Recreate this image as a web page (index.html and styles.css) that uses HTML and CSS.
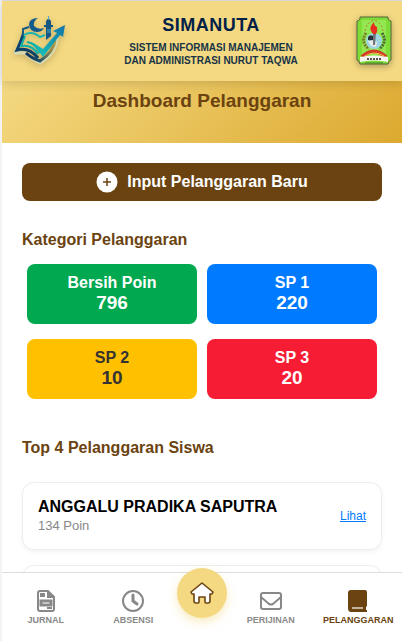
FILE: index.html
```html
<!DOCTYPE html>
<html lang="id">
<head>
  <meta charset="UTF-8">
  <meta name="viewport" content="width=device-width, initial-scale=1.0">
  <title>SIMANUTA - Dashboard Pelanggaran</title>
  <link rel="stylesheet" href="styles.css">
</head>
<body>
  <div class="app">
    <header class="header">
      <svg class="logo" viewBox="0 0 52 52" aria-hidden="true">
        <defs>
          <linearGradient id="blue" x1="0" y1="1" x2="1" y2="0">
            <stop offset="0" stop-color="#17cbbd"/>
            <stop offset="0.5" stop-color="#14a0b0"/>
            <stop offset="1" stop-color="#1670a8"/>
          </linearGradient>
          <linearGradient id="shield" x1="0" y1="0" x2="1" y2="0">
            <stop offset="0" stop-color="#0d3358"/>
            <stop offset="0.45" stop-color="#174d68"/>
            <stop offset="1" stop-color="#b39a45"/>
          </linearGradient>
        </defs>
        <!-- perisai -->
        <path d="M8 24 L1 38 L11 38 Q17 44 26 48 Q42 39 43 23" fill="none" stroke="#d6dbb4" stroke-width="3"/>
        <path d="M12 38 Q17 43 26 46 Q40 37 41 25" fill="none" stroke="url(#shield)" stroke-width="3"/>
        <path d="M15 12 L9 14 V22 M9 18 L6 28" fill="none" stroke="#165b86" stroke-width="2"/>
        <!-- bulan dan menara -->
        <path d="M24 3 Q15 3 15 10 Q16 17 23 17 Q28 17 30 13 Q24 15 20 11 Q19 6 24 3Z" fill="#155b8c"/>
        <path d="M32 25 V12 H30 V10 H32 V6 L34.500 3 L37 6 V10 H39 V12 H37 V21Z" fill="#155682"/>
        <path d="M34.500 1 V5 M34 14 V18 M36 14 V18" stroke="#50a8c5" stroke-width="1"/>
        <!-- buku -->
        <path d="M10 20 Q18 15 26 22 L31 20" fill="none" stroke="#1bb7b0" stroke-width="2"/>
        <path d="M9 21 L3 35 Q15 32 24 43" fill="none" stroke="#0d4169" stroke-width="3"/>
        <path d="M11 21 L7 31 Q18 29 24 39 M13 27 Q21 28 26 38" fill="none" stroke="#0aafa8" stroke-width="2"/>
        <!-- panah -->
        <path d="M18 27 L29 34 L43 18 L39 16 L51 10 L49 22 L46 20 L29 42Z" fill="url(#blue)"/>
      </svg>
      <div class="brand">
        <h1 class="brand-name">SIMANUTA</h1>
        <p class="brand-text">SISTEM INFORMASI MANAJEMEN<br>DAN ADMINISTRASI NURUT TAQWA</p>
      </div>
      <svg class="emblem" viewBox="0 0 36 50" aria-hidden="true">
        <path d="M4 1 H32 V3 Q33 5 35 5 V44 Q33 44 32 48 H4 Q3 44 1 44 V5 Q3 5 4 3Z" fill="#7ddd36" stroke="#57653b" stroke-width="1"/>
        <path d="M6 4 H30 V44 H6Z" fill="#93e852"/>
        <path d="M9 15 Q10 7 18 4 Q26 7 27 15" fill="none" stroke="#b07a35" stroke-width="1" stroke-dasharray="2 2"/>
        <path d="M10 17 Q4 26 13 33" fill="none" stroke="#777c28" stroke-width="3" stroke-dasharray="2 1"/>
        <path d="M26 17 Q32 26 23 33" fill="none" stroke="#476a35" stroke-width="3" stroke-dasharray="2 1"/>
        <circle cx="18" cy="25" r="8" fill="#9ed5e3"/>
        <path d="M12 21 Q15 17 19 22 L17 25 L12 24Z" fill="#26313a"/>
        <path d="M12 25 L17 24 L21 26 L20 31 L15 30Z" fill="#e8ecea"/>
        <path d="M17 17 H20 L19 29 H17Z" fill="#70747b"/>
        <path d="M15 15 Q13 11 18 6 Q18 10 21 11 Q22 15 20 18 H17Z" fill="#e82c20"/>
        <path d="M6 41 Q18 30 30 41" fill="none" stroke="#d43b27" stroke-width="4"/>
        <path d="M9 40 Q18 34 28 40" fill="none" stroke="#efc34d" stroke-width="1"/>
        <path d="M4 41 Q18 38 32 41 V46 Q18 43 4 46Z" fill="#f6f4ed"/>
        <path d="M11 43 H25" stroke="#555" stroke-width="2" stroke-dasharray="2 1"/>
        <path d="M9 47 H27" stroke="#4a7e28" stroke-width="1"/>
      </svg>
    </header>

    <main class="content">
      <div class="banner">
        <h2 class="banner-title">Dashboard Pelanggaran</h2>
      </div>

      <div class="container">
        <button class="btn-input" type="button">
          <svg class="plus" viewBox="0 0 22 22" aria-hidden="true">
            <circle cx="11" cy="11" r="10.5" fill="#fff"/>
            <path d="M11 7 V15 M7 11 H15" stroke="#6b4310" stroke-width="1.5"/>
          </svg>
          Input Pelanggaran Baru
        </button>

        <h3 class="section-title">Kategori Pelanggaran</h3>
        <div class="kategori">
          <div class="kartu hijau"><span>Bersih Poin</span><strong>796</strong></div>
          <div class="kartu biru"><span>SP 1</span><strong>220</strong></div>
          <div class="kartu kuning"><span>SP 2</span><strong>10</strong></div>
          <div class="kartu merah"><span>SP 3</span><strong>20</strong></div>
        </div>

        <h3 class="section-title section-top">Top 4 Pelanggaran Siswa</h3>
        <div class="siswa">
          <div>
            <div class="nama">ANGGALU PRADIKA SAPUTRA</div>
            <div class="poin">134 Poin</div>
          </div>
          <a class="lihat" href="#">Lihat</a>
        </div>
        <div class="siswa"></div>
      </div>
    </main>

    <nav class="bottom-nav">
      <a class="nav-item" href="#">
        <svg class="nav-icon" viewBox="0 0 24 24" aria-hidden="true">
          <path d="M5 2 H14 L20 8 V20 Q20 22 18 22 H6 Q4 22 4 20 V4 Q4 2 6 2" fill="none" stroke="currentColor" stroke-width="2"/>
          <path d="M13 1 L21 9 H13Z M6 4 H11 V8 H6Z" fill="currentColor"/>
          <path d="M7 12 H17 V16 H7Z" fill="none" stroke="currentColor" stroke-width="3"/>
          <path d="M13 19 H18" stroke="currentColor" stroke-width="2"/>
        </svg>
        <span>JURNAL</span>
      </a>
      <a class="nav-item" href="#">
        <svg class="nav-icon" viewBox="0 0 24 24" aria-hidden="true">
          <circle cx="12" cy="12" r="10" fill="none" stroke="currentColor" stroke-width="2"/>
          <path d="M12 6 V12 L16 15" fill="none" stroke="currentColor" stroke-width="3" stroke-linecap="round"/>
        </svg>
        <span>ABSENSI</span>
      </a>
      <a class="nav-home" href="#" aria-label="Beranda">
        <svg class="home-icon" viewBox="0 0 24 24" aria-hidden="true">
          <path d="M12 2 L1 11 L2 13 H4 V20 Q4 22 6 22 H8 Q9 22 9 21 V16 H15 V21 Q15 22 16 22 H18 Q20 22 20 20 V13 H22 L23 11Z" fill="#fff" stroke="#6b4310" stroke-width="1.6" stroke-linejoin="round"/>
        </svg>
      </a>
      <a class="nav-item" href="#">
        <svg class="nav-icon" viewBox="0 0 24 24" aria-hidden="true">
          <rect x="2" y="4" width="20" height="16" rx="2" fill="none" stroke="currentColor" stroke-width="2"/>
          <path d="M2 8 L10 15 Q12 16 14 15 L22 8" fill="none" stroke="currentColor" stroke-width="2"/>
        </svg>
        <span>PERIJINAN</span>
      </a>
      <a class="nav-item active" href="#">
        <svg class="nav-icon" viewBox="0 0 24 24" aria-hidden="true">
          <path d="M5 1 H19 Q21 1 21 3 V17 L20 18 V21 H21 V23 H5 Q2 23 2 19 V4 Q2 1 5 1Z" fill="currentColor"/>
          <path d="M6 19 H17" stroke="#fff" stroke-width="1.2"/>
        </svg>
        <span>PELANGGARAN</span>
      </a>
    </nav>
  </div>
</body>
</html>
```

FILE: styles.css
```css
* {
  box-sizing: border-box;
  margin: 0;
  padding: 0;
}

body {
  font-family: Arial, "Liberation Sans", sans-serif;
  background: #fff;
}

.app {
  display: flex;
  flex-direction: column;
  height: 100vh;
  border-top: 1px solid #e0e0e0;
  border-left: 2px solid #f3f3f3;
}

.header {
  display: flex;
  align-items: center;
  justify-content: space-between;
  height: 80px;
  padding: 0 10px 0 12px;
  background: #f4d982;
  box-shadow: 0 2px 10px rgba(0, 0, 0, 0.15);
  z-index: 2;
}

.logo {
  width: 52px;
  height: 52px;
  filter: drop-shadow(0 2px 3px rgba(0, 0, 0, 0.2));
}

.emblem {
  width: 36px;
  height: 50px;
  filter: drop-shadow(0 2px 3px rgba(0, 0, 0, 0.3));
}

.brand {
  flex: 1;
  text-align: center;
  color: #002147;
}

.brand-name {
  font-size: 18px;
  line-height: 20px;
  letter-spacing: 0.5px;
}

.brand-text {
  margin-top: 6px;
  font-size: 10px;
  line-height: 13px;
  font-weight: bold;
  color: #173447;
}

.content {
  flex: 1;
  min-height: 0;
  overflow-y: auto;
  scrollbar-width: none;
}

.banner {
  height: 62px;
  padding-top: 8px;
  text-align: center;
  background: linear-gradient(135deg, #f4d982, #dca92f);
}

.banner-title {
  font-size: 19px;
  line-height: 24px;
  color: #6b4310;
}

.container {
  padding: 20px;
}

.btn-input {
  display: flex;
  align-items: center;
  justify-content: center;
  gap: 9px;
  width: 100%;
  height: 38px;
  border: none;
  border-radius: 8px;
  background: #6b4310;
  color: #fff;
  font: bold 16px Arial, "Liberation Sans", sans-serif;
  cursor: pointer;
}

.plus {
  width: 22px;
  height: 22px;
}

.section-title {
  margin-top: 29px;
  font-size: 16px;
  line-height: 20px;
  color: #6b4310;
}

.section-top {
  margin-top: 39px;
  margin-bottom: 24px;
}

.kategori {
  display: grid;
  grid-template-columns: 1fr 1fr;
  gap: 15px 10px;
  margin-top: 14px;
  padding: 0 5px;
}

.kartu {
  display: flex;
  flex-direction: column;
  align-items: center;
  justify-content: center;
  height: 60px;
  border-radius: 8px;
  color: #fff;
  font-size: 16px;
  line-height: 18px;
  font-weight: bold;
}

.kartu strong {
  font-size: 19px;
  line-height: 22px;
}

.hijau { background: #00a84f; }
.biru { background: #007bff; }
.kuning { background: #ffc000; color: #333; }
.merah { background: #f61c34; }

.siswa {
  display: flex;
  align-items: center;
  justify-content: space-between;
  min-height: 68px;
  margin-bottom: 15px;
  padding: 0 15px;
  border: 1px solid #eee;
  border-radius: 12px;
  background: #fff;
  box-shadow: 0 2px 5px rgba(0, 0, 0, 0.05);
}

.nama {
  font-size: 16px;
  line-height: 20px;
  font-weight: bold;
  color: #000;
}

.poin {
  font-size: 13px;
  line-height: 18px;
  color: #888;
}

.lihat {
  font-size: 12px;
  color: #007bff;
}

.bottom-nav {
  display: flex;
  height: 69px;
  border-top: 1px solid #ddd;
  background: #fff;
  z-index: 2;
}

.nav-item {
  display: flex;
  flex: 1 1 0;
  flex-direction: column;
  align-items: center;
  gap: 1px;
  min-width: 0;
  padding-top: 16px;
  color: #888;
  font-size: 9px;
  line-height: 12px;
  font-weight: bold;
  text-decoration: none;
}

.nav-item.active {
  color: #6b4310;
}

.nav-icon {
  width: 24px;
  height: 24px;
}

.nav-home {
  display: flex;
  align-items: center;
  justify-content: center;
  width: 50px;
  height: 50px;
  margin-top: -5px;
  border-radius: 50%;
  background: #f4d982;
  box-shadow: 0 4px 10px rgba(244, 217, 130, 0.5);
}

.home-icon {
  width: 24px;
  height: 24px;
}
```
